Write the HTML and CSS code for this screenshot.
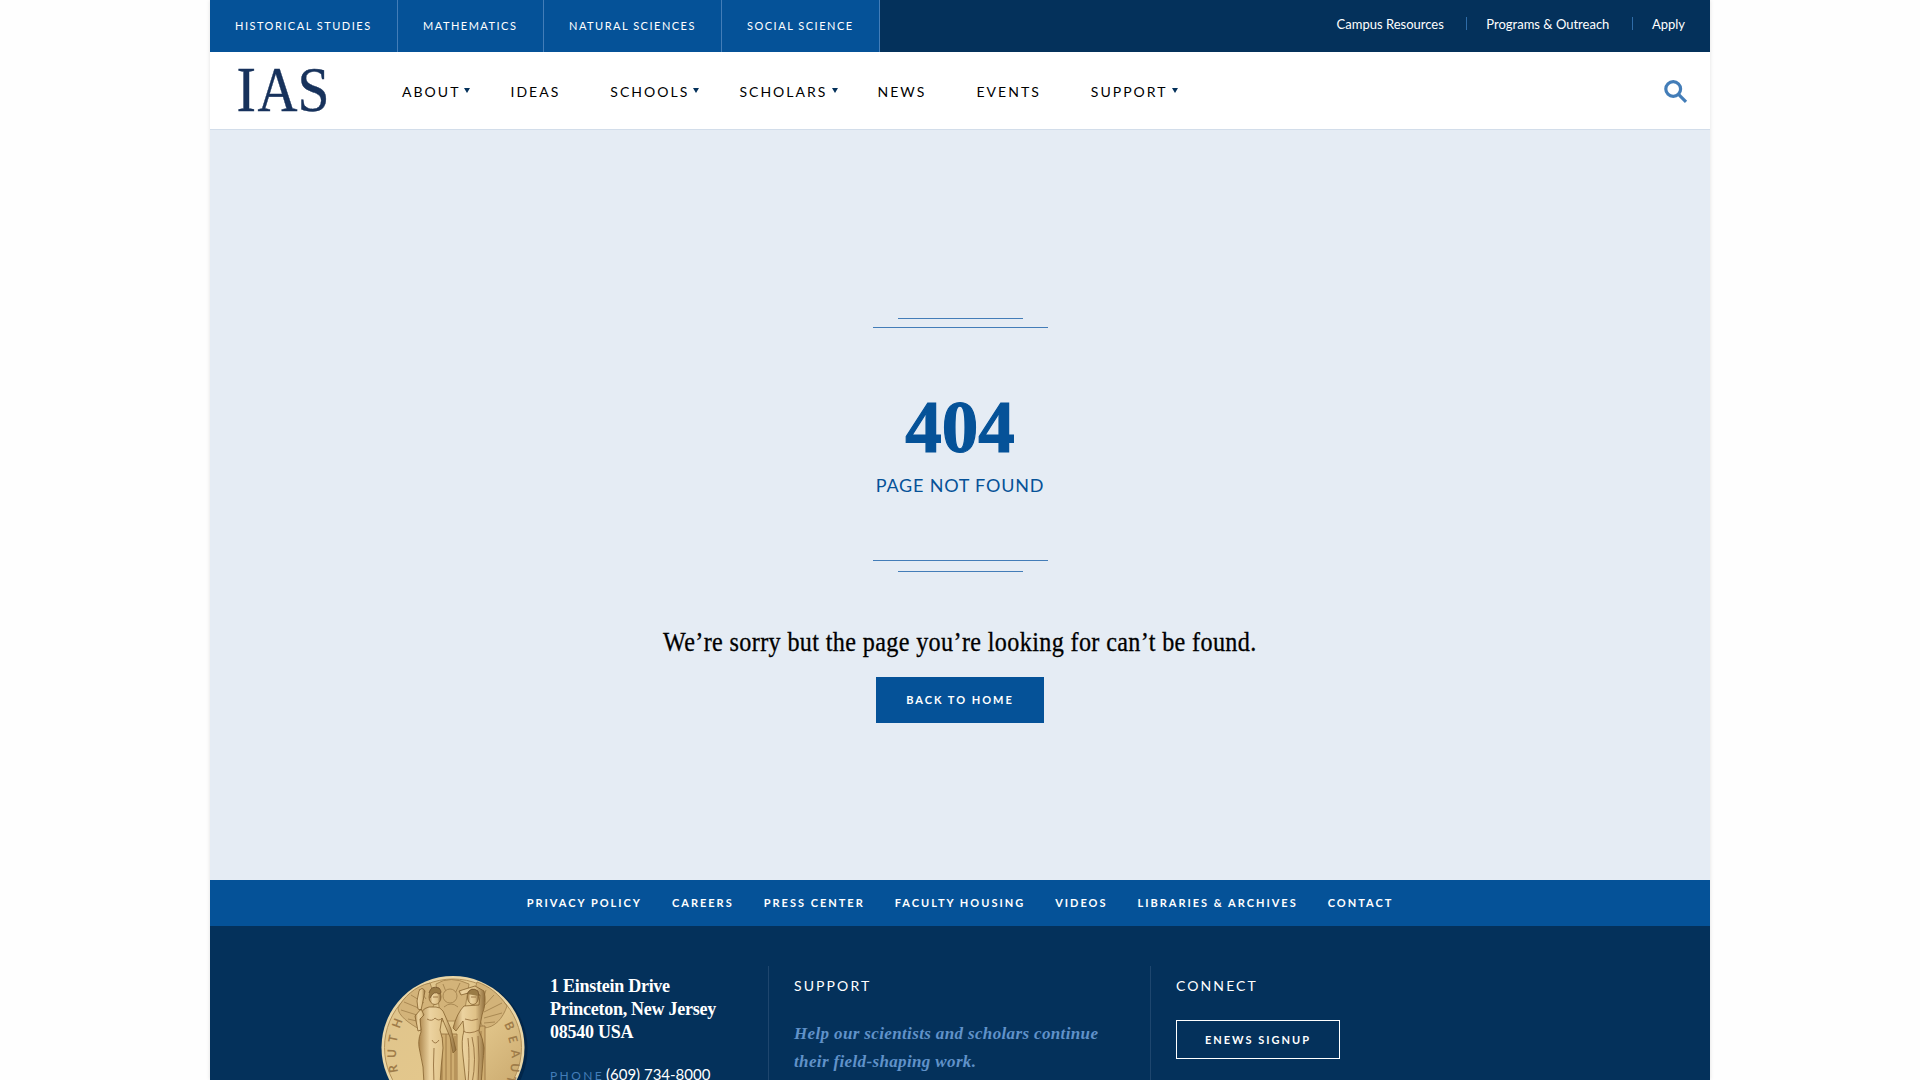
FILE: index.html
```html
<!DOCTYPE html>
<html lang="en">
<head>
<meta charset="utf-8">
<title>Page not found | IAS</title>
<link rel="stylesheet" href="styles.css">
</head>
<body>
<div class="page">
  <div class="topbar">
    <nav class="schools">
      <a class="school historical">Historical Studies</a>
      <a class="school mathematics">Mathematics</a>
      <a class="school natural">Natural Sciences</a>
      <a class="school social">Social Science</a>
    </nav>
    <nav class="utility">
      <a>Campus Resources</a><i class="rule"></i>
      <a>Programs &amp; Outreach</a><i class="rule"></i>
      <a>Apply</a>
    </nav>
  </div>
  <header class="header">
    <svg class="logo" viewBox="0 0 92 48" width="92" height="48" role="img" aria-label="IAS">
      <text x="-.5" y="45" textLength="19.5" lengthAdjust="spacingAndGlyphs">I</text>
      <text x="20.5" y="45" textLength="40" lengthAdjust="spacingAndGlyphs">A</text>
      <text x="60.5" y="45" textLength="32" lengthAdjust="spacingAndGlyphs">S</text>
    </svg>
    <nav class="main-nav">
      <a class="has-menu">About</a>
      <a>Ideas</a>
      <a class="has-menu">Schools</a>
      <a class="has-menu">Scholars</a>
      <a>News</a>
      <a>Events</a>
      <a class="has-menu">Support</a>
    </nav>
    <svg class="search" width="24" height="24" viewBox="0 0 24 24">
      <circle cx="9.2" cy="9" r="7.4"/>
      <path d="M14.3 14.2L22 21.8"/>
    </svg>
  </header>
  <main class="error">
    <div class="line short"></div>
    <div class="line long upper"></div>
    <h1 class="code">404</h1>
    <p class="label">Page not found</p>
    <div class="line long"></div>
    <div class="line short lower"></div>
    <p class="message">We’re sorry but the page you’re looking for can’t be found.</p>
    <a class="home">Back to home</a>
  </main>
  <nav class="footer-nav">
    <a>Privacy Policy</a><a>Careers</a><a>Press Center</a><a>Faculty Housing</a><a>Videos</a><a>Libraries &amp; Archives</a><a>Contact</a>
  </nav>
  <footer class="footer">
    <svg class="medal" width="150" height="150" viewBox="0 0 150 150">
      <defs>
        <linearGradient id="gold" x1="0" y1="0" x2="1" y2="1">
          <stop offset="0" stop-color="#dfc48c"/><stop offset=".5" stop-color="#e3c78c"/><stop offset="1" stop-color="#c4a267"/>
        </linearGradient>
        <linearGradient id="body" x1="0" y1="0" x2="1" y2="0">
          <stop offset="0" stop-color="#ad874d"/><stop offset=".3" stop-color="#ecd3a0"/><stop offset=".7" stop-color="#dfc187"/><stop offset="1" stop-color="#8f6d3c"/>
        </linearGradient>
      </defs>
      <circle cx="75" cy="73" r="71.5" fill="#02264a"/>
      <circle cx="72" cy="71.5" r="71.5" fill="#ead6a6"/>
      <circle cx="72" cy="71.5" r="68.5" fill="url(#gold)" stroke="#b39159" stroke-width="1"/>
      <g fill="#d3b379" stroke="#a5844f" stroke-width=".9">
        <path d="M40 54C27 47 17 39 17 32C22 22 34 10 49 7L55 25Z"/>
        <path d="M102 52C114 52 122 42 126 30C118 18 108 10 96 6L91 24Z"/>
        <path d="M55 8Q69 -1 88 8L82 45H60Z"/>
        <path d="M20 34L39 40M23 26L40 33M30 19L43 27M38 13L45 23M27 43L40 46M105 14L101 27M113 19L102 31M121 27L103 36M121 37L103 42M114 46L103 47M62 8L67 21M79 7L72 22M63 31Q70 25 77 31" fill="none"/>
        <circle cx="69" cy="20" r="7"/>
      </g>
      <path d="M60 58H76V108H60ZM93 50H104V108H88Z" fill="#cfad70" stroke="#946f3c" stroke-width=".8"/>
      <path d="M61 61V108M65 58V108M70 60V108M74 60V108M100 55V108" stroke="#a17d46" stroke-width="1"/>
      <g fill="url(#body)" stroke="#85622f" stroke-width=".8">
        <path d="M48 31Q39 33 39 43L40 56Q36 65 39 76Q43 90 43 108H59Q60 90 62 72Q62 62 59 54L61 42L69 61L72 77L75 74L70 53L62 35Q59 31 55 31Z"/>
        <path d="M83 30Q76 37 72 52L75 55L82 45L83 55Q80 63 82 80L85 108H100Q102 86 103 72Q102 62 98 55L101 39Q106 26 103 15L94 10L78 15L80 19L91 16L99 19L98 29Z"/>
        <path d="M40 33L34 40L37 55L40 54L39 43L43 39ZM36 25L38 15Q41 10 44 15L42 25L40 34L37 33Z"/>
        <ellipse cx="54" cy="21" rx="6" ry="7.5"/>
        <ellipse cx="92" cy="21" rx="5.5" ry="7.5"/>
      </g>
      <path d="M48 17Q50 9 58 12Q62 17 58 18Q53 14 49 22M86 18Q90 10 97 15L98 20" fill="#9a7b45" stroke="#755329" stroke-width=".8"/>
      <path d="M46 43Q51 46 54 42Q58 46 61 42M51 64Q54 70 58 64M53 72Q52 88 53 108M52 21H57M90 21H95M84 43Q91 46 97 43M82 55Q88 59 98 54M91 61Q96 82 91 108M87 62Q89 80 87 108M97 60Q99 82 97 108" fill="none" stroke="#95713f" stroke-width=".9"/>
      <g class="engraved">
        <text transform="translate(18.5 53) rotate(-69)">H</text><text transform="translate(15.5 67) rotate(-79)">T</text><text transform="translate(15 82) rotate(-89)">U</text><text transform="translate(17 96) rotate(-99)">R</text>
        <text transform="translate(123 48) rotate(66)">B</text><text transform="translate(127 61) rotate(75)">E</text><text transform="translate(130 74) rotate(84)">A</text><text transform="translate(130 87) rotate(94)">U</text><text transform="translate(127 99) rotate(105)">T</text>
      </g>
    </svg>
    <section class="contact">
      <address class="address">1 Einstein Drive<br>Princeton, New Jersey<br>08540 USA</address>
      <p class="phone"><span class="phone-label">Phone</span>(609) 734-8000</p>
    </section>
    <section class="column support">
      <h2 class="heading">Support</h2>
      <p class="appeal">Help our scientists and scholars continue<br>their field-shaping work.</p>
    </section>
    <section class="column connect">
      <h2 class="heading">Connect</h2>
      <a class="signup">Enews Signup</a>
    </section>
  </footer>
</div>
</body>
</html>
```
FILE: styles.css
```css
* { box-sizing: border-box; }
html, body { height: 100%; }
body { margin: 0; overflow: hidden; background: #fefefe; font-family: Lato, sans-serif; color: #000; }
h1, h2, p { margin: 0; font-weight: 400; }

.page { width: 1500px; height: 1080px; margin: 0 auto; display: flex; flex-direction: column; overflow: hidden; background: #fff; box-shadow: 0 0 4px rgba(0, 0, 0, .12); }

.topbar { flex: none; height: 52px; display: flex; justify-content: space-between; background: #04315b; color: #fff; }
.schools { display: flex; background: #055298; }
.school { border-right: 1px solid #437db8; padding-left: 25px; font-size: 11px; line-height: 52px; letter-spacing: 1.5px; text-transform: uppercase; white-space: nowrap; }
.historical { width: 188px; }
.mathematics { width: 146px; }
.natural { width: 178px; }
.social { width: 158px; }
.utility { display: flex; padding: 17px 25px 0 0; font-size: 13px; line-height: 15px; }
.rule { width: 1px; height: 13px; margin: 0 19px 0 22.5px; background: #2f6ca8; }

.header { flex: none; height: 78px; display: flex; border-bottom: 1px solid #d2ddea; padding: 0 22px 0 27px; }
.logo { margin-top: 14px; fill: #17325c; stroke: #17325c; stroke-width: .4; font: 63px "Liberation Serif", serif; overflow: visible; }
.main-nav { display: flex; gap: 50px; margin-left: 73px; font-size: 14px; line-height: 80px; letter-spacing: 2.03px; text-transform: uppercase; }
.main-nav a { position: relative; }
.has-menu::after { content: ""; position: absolute; right: -10px; top: 36px; border: 3px solid transparent; border-top: 5px solid #04315b; border-bottom: 0; }
.search { margin: 28px 0 0 auto; fill: none; stroke: #437db8; stroke-width: 3.2; }

.error { flex: none; height: 750px; display: flex; flex-direction: column; align-items: center; padding-top: 188px; background: #e5ecf4; }
.line { flex: none; height: 1px; background: #437db8; }
.short { width: 125px; margin-left: 1px; }
.long { width: 175px; margin-left: 1px; }
.upper { margin-top: 8px; }
.lower { margin-top: 10px; }
.code { margin-top: 58px; font: bold 73px/84px "Liberation Serif", serif; color: #055298; -webkit-text-stroke: 1.2px #055298; }
.label { height: 87px; margin-top: 3px; font-size: 18px; line-height: 24px; letter-spacing: .8px; text-transform: uppercase; color: #055298; }
.message { margin-top: 53px; font: 26.5px/34px "Liberation Serif", serif; letter-spacing: .4px; white-space: nowrap; transform: scaleX(.911); -webkit-text-stroke: .3px #000; }
.home { margin-top: 18px; width: 168px; height: 46px; background: #055298; color: #fff; font-size: 11px; font-weight: 700; line-height: 46px; letter-spacing: 2px; text-align: center; text-transform: uppercase; }

.footer-nav { flex: none; height: 46px; display: flex; justify-content: center; gap: 30px; background: #055298; color: #fff; font-size: 11px; font-weight: 700; line-height: 46px; letter-spacing: 2px; text-transform: uppercase; white-space: nowrap; }
.footer { flex: 1; display: flex; padding-left: 171px; background: #04315b; color: #fff; }
.medal { flex: none; margin-top: 50px; }
.engraved { font: bold 12px Lato, sans-serif; fill: #9f7c49; }
.contact { width: 237px; padding: 49px 0 0 19px; white-space: nowrap; }
.address { font: bold 18px/23px "Liberation Serif", serif; letter-spacing: -.26px; }
.phone { display: flex; align-items: baseline; margin-top: 19px; font-size: 15px; line-height: 22px; }
.phone-label { width: 56px; font-size: 12px; letter-spacing: 2.4px; text-transform: uppercase; color: #437db8; }
.column { height: 200px; margin-top: 40px; border-left: 1px solid #1e466e; padding: 10px 0 0 25px; }
.support { width: 382px; }
.heading { font-size: 14px; line-height: 20px; letter-spacing: 2.1px; text-transform: uppercase; }
.appeal { margin-top: 24px; font: italic bold 17px/28px "Liberation Serif", serif; letter-spacing: .36px; color: #6092c9; white-space: nowrap; }
.signup { display: block; width: 164px; height: 39px; margin-top: 24px; border: 1px solid #fff; font-size: 11px; font-weight: 700; line-height: 38px; letter-spacing: 2px; text-align: center; text-transform: uppercase; }
```
